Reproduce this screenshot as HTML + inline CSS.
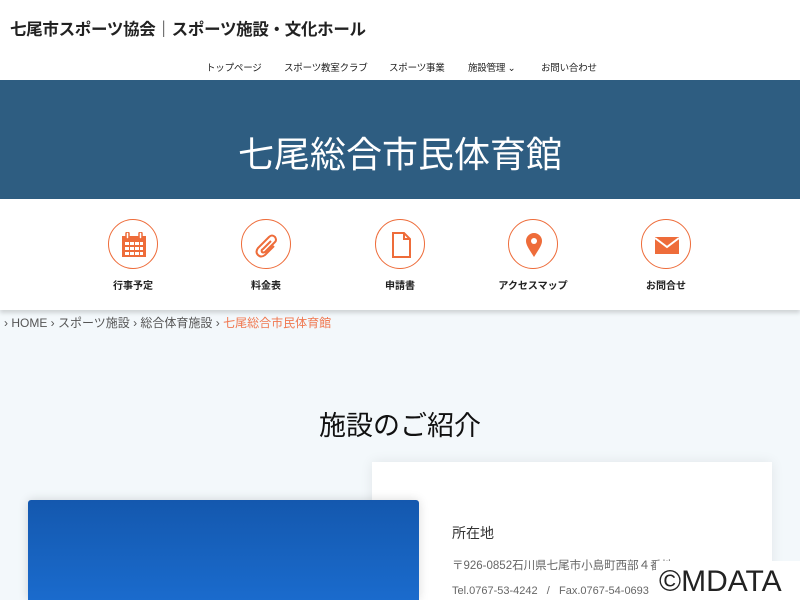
<!DOCTYPE html>
<html><head><meta charset="utf-8"><style>
*{margin:0;padding:0;box-sizing:border-box}
html,body{width:800px;height:600px;overflow:hidden}
body{background:#f3f8fb;font-family:"Liberation Sans","Noto Sans CJK JP",sans-serif;position:relative}
.hdr{position:absolute;left:0;top:0;width:800px;height:80px;background:#fff}
.logo{position:absolute;left:10px;top:16px;font-size:16.5px;font-weight:bold;color:#222;letter-spacing:-0.3px}
.nav{position:absolute;top:60px;font-size:9.5px;color:#222;letter-spacing:-0.2px}
.ban{position:absolute;left:0;top:80px;width:800px;height:119px;background:#2e5d81;color:#fff;font-size:36px;text-align:center;line-height:150px}
.icons{position:absolute;left:0;top:199px;width:800px;height:111px;background:#fff;box-shadow:0 3px 4px rgba(0,0,0,.15)}
.ic{position:absolute;top:20px;width:50px;height:50px;border:1.5px solid #ee6c3a;border-radius:50%}
.ic svg{position:absolute;left:12px;top:12px}
.lb{position:absolute;top:78px;width:120px;text-align:center;font-size:10px;font-weight:bold;color:#222}
.bc{position:absolute;left:4px;top:314px;font-size:12px;color:#555}
.bc b{font-weight:normal;color:#f07850}
h2{position:absolute;left:0;width:800px;top:404px;text-align:center;font-weight:normal;font-size:27px;color:#111}
.card{position:absolute;left:372px;top:462px;width:400px;height:138px;background:#fff;box-shadow:0 0 12px rgba(0,0,0,.08)}
.img{position:absolute;left:28px;top:500px;width:391px;height:100px;border-radius:3px 3px 0 0;background:linear-gradient(180deg,#1458ae,#1a6bcd);box-shadow:0 0 10px rgba(0,0,0,.15)}
.t1{position:absolute;left:452px;top:523px;font-size:14px;color:#333}
.t2{position:absolute;left:452px;top:557px;font-size:11.5px;color:#666}
.t3{position:absolute;left:452px;top:585px;font-size:11px;color:#666;white-space:pre}
.wm{position:absolute;left:656px;top:561px;width:144px;height:39px;background:#fff;font-size:30px;color:#222;padding-left:3px;line-height:42px}
</style></head><body>
<div class="hdr">
<div class="logo">七尾市スポーツ協会｜スポーツ施設・文化ホール</div>
<div class="nav" style="left:206px">トップページ</div>
<div class="nav" style="left:284px">スポーツ教室クラブ</div>
<div class="nav" style="left:389px">スポーツ事業</div>
<div class="nav" style="left:468px">施設管理 ⌄</div>
<div class="nav" style="left:541px">お問い合わせ</div>
</div>
<div class="ban">七尾総合市民体育館</div>
<div class="icons">
<div class="ic" style="left:108px"><svg width="26" height="26" viewBox="0 0 26 26"><rect x="1" y="4" width="24" height="21" fill="#ee6c3a"/><g fill="#fff"><rect x="4" y="10" width="4" height="3"/><rect x="9" y="10" width="4" height="3"/><rect x="14" y="10" width="4" height="3"/><rect x="19" y="10" width="3" height="3"/><rect x="4" y="15" width="4" height="3"/><rect x="9" y="15" width="4" height="3"/><rect x="14" y="15" width="4" height="3"/><rect x="19" y="15" width="3" height="3"/><rect x="4" y="20" width="4" height="3"/><rect x="9" y="20" width="4" height="3"/><rect x="14" y="20" width="4" height="3"/><rect x="19" y="20" width="3" height="3"/></g><rect x="5" y="0" width="3" height="7" rx="1.5" fill="#fff" stroke="#ee6c3a" stroke-width="1.5"/><rect x="18" y="0" width="3" height="7" rx="1.5" fill="#fff" stroke="#ee6c3a" stroke-width="1.5"/></svg></div>
<div class="ic" style="left:241px"><svg width="26" height="26" viewBox="0 0 26 26"><path d="M20 14 L11 23 Q7 26 4 23 Q1 20 4 16 L15 5 Q18 2 21 5 Q23 8 21 10 L11 20 Q9 21 8 20 Q7 18 9 17 L17 9" fill="none" stroke="#ee6c3a" stroke-width="2"/></svg></div>
<div class="ic" style="left:375px"><svg width="26" height="26" viewBox="0 0 26 26"><path d="M5 1 H16 L22 7 V25 H5 Z M16 1 V7 H22" fill="none" stroke="#ee6c3a" stroke-width="2"/></svg></div>
<div class="ic" style="left:508px"><svg width="26" height="26" viewBox="0 0 26 26"><path d="M13 25 C8 17 5 13 5 9 A8 8 0 0 1 21 9 C21 13 18 17 13 25 Z" fill="#ee6c3a"/><circle cx="13" cy="9" r="3" fill="#fff"/></svg></div>
<div class="ic" style="left:641px"><svg width="26" height="26" viewBox="0 0 26 26"><rect x="1" y="5" width="24" height="17" fill="#ee6c3a"/><path d="M1 6 L13 15 L25 6" fill="none" stroke="#fff" stroke-width="2"/></svg></div>
<div class="lb" style="left:73px">行事予定</div>
<div class="lb" style="left:206px">料金表</div>
<div class="lb" style="left:340px">申請書</div>
<div class="lb" style="left:473px">アクセスマップ</div>
<div class="lb" style="left:606px">お問合せ</div>
</div>
<div class="bc">› HOME › スポーツ施設 › 総合体育施設 › <b>七尾総合市民体育館</b></div>
<h2>施設のご紹介</h2>
<div class="card"></div>
<div class="img"></div>
<div class="t1">所在地</div>
<div class="t2">〒926-0852石川県七尾市小島町西部４番地</div>
<div class="t3">Tel.0767-53-4242   /   Fax.0767-54-0693</div>
<div class="wm">©MDATA</div>
</body></html>
